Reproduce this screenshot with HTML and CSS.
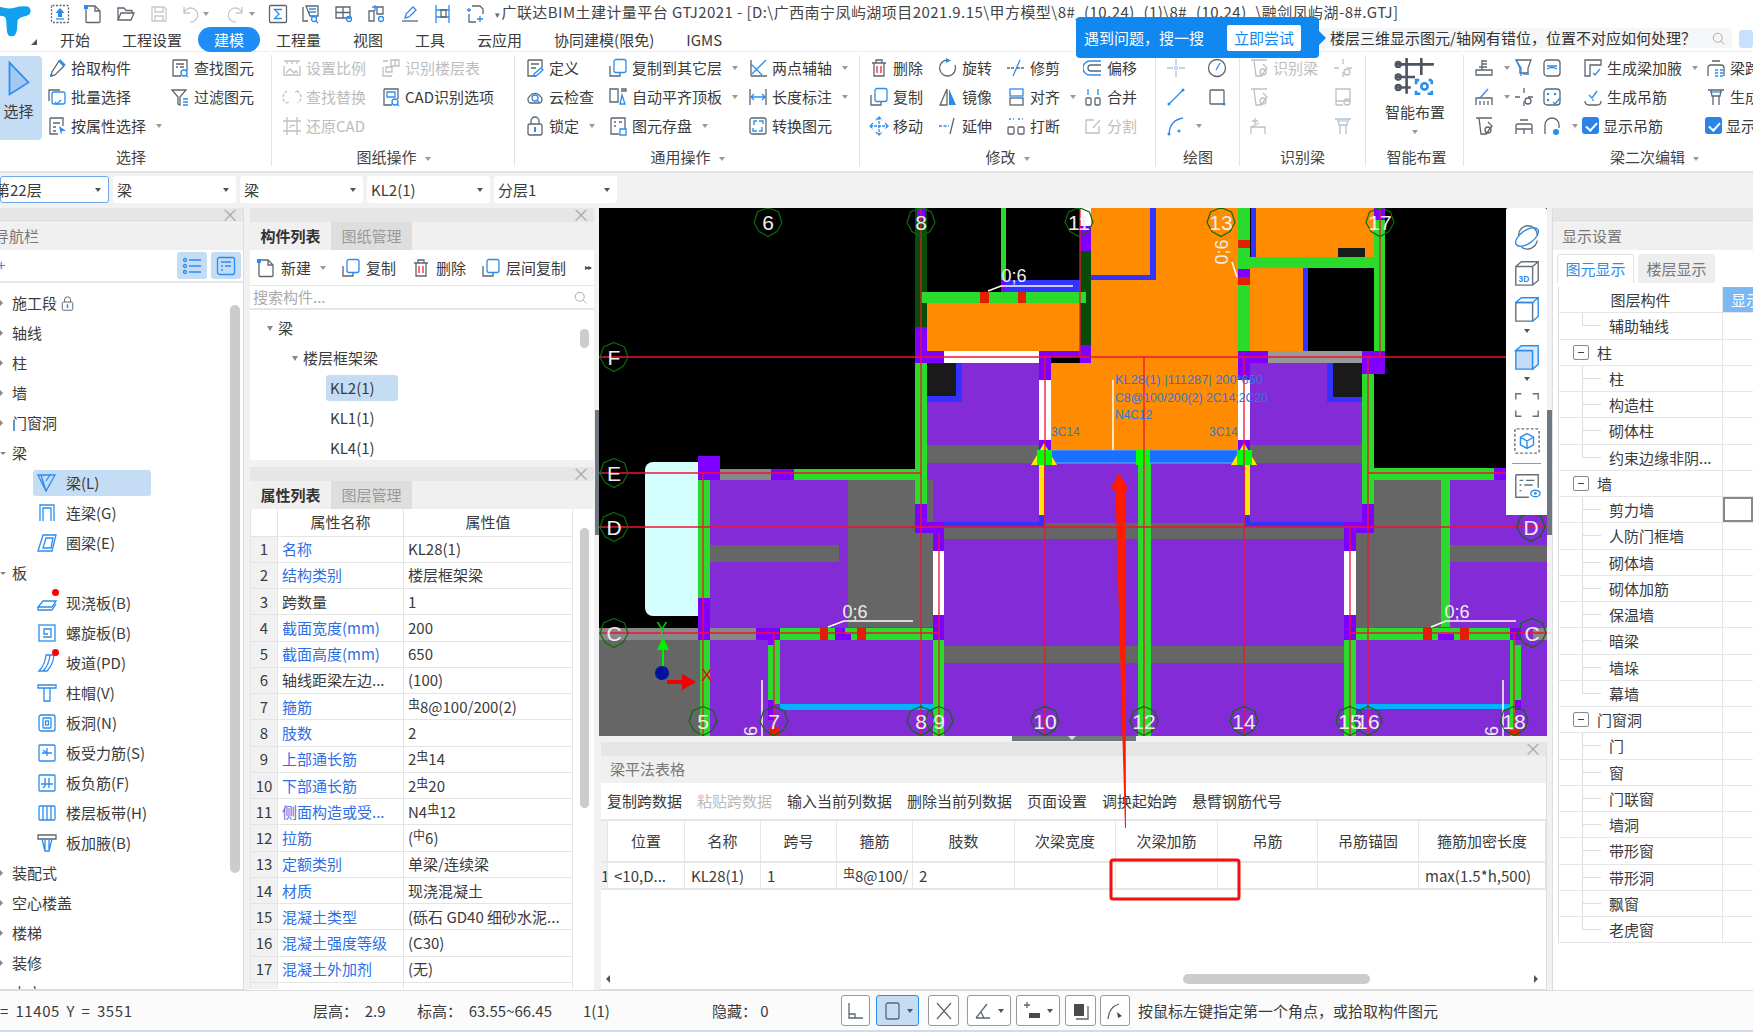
FILE: index.html
```html
<!DOCTYPE html>
<html lang="zh">
<head>
<meta charset="utf-8">
<title>广联达BIM土建计量平台 GTJ2021</title>
<link rel="stylesheet" href="styles.css">
</head>
<body>
<svg class="defs" width="0" height="0">
<defs>
<symbol id="up" viewBox="0 0 20 20"><rect x="1.5" y="1.5" width="17" height="17" rx="1" stroke-dasharray="2 1.5"/><path class="bf" d="M10 4l4.500 5H12v4H8V9H5.500z"/><path class="b" d="M6 15h8"/></symbol>
<symbol id="new" viewBox="0 0 20 20"><path d="M3 2h9l5 5v10.500q0 1-1 1H4q-1 0-1-1z"/><path d="M12 2v5h5"/><path class="bf" d="M1 1h4v4H1z"/></symbol>
<symbol id="open" viewBox="0 0 20 20"><path d="M2 16V4h6l2 2.500h6V9M2 16l3-7h13l-3 7z"/></symbol>
<symbol id="save" viewBox="0 0 20 20"><path d="M3 3h12l2 2v12H3zM6 3v5h8V3M6 17v-5h8v5"/></symbol>
<symbol id="undo" viewBox="0 0 20 20"><path d="M4 3v6h6M4 9a7 7 0 1 1 6 9"/></symbol>
<symbol id="redo" viewBox="0 0 20 20"><path d="M16 3v6h-6M16 9a7 7 0 1 0-6 9"/></symbol>
<symbol id="sig" viewBox="0 0 20 20"><rect x="1.500" y="1.500" width="17" height="17" rx="1"/><path class="b" d="M14 5.500H6.500L11 10l-4.500 4.500H14"/></symbol>
<symbol id="t1" viewBox="0 0 20 20"><path d="M2 3v14h5M5 2h12v10H9z"/><path class="b" d="M8 5h7M8 8h7"/><circle class="b" cx="13" cy="15" r="2.500"/><path class="b" d="M15 17l2 2"/></symbol>
<symbol id="t2" viewBox="0 0 20 20"><path d="M2 3h14v11H2zM9 3v11M2 8.500h14"/><circle class="b" cx="15" cy="15" r="2.500"/></symbol>
<symbol id="t3" viewBox="0 0 20 20"><path d="M2 7h5v10H2z"/><path d="M10 3h6v7h-6z"/><path class="b" d="M8 1v6M5 3h6"/><circle class="b" cx="14" cy="15" r="2.500"/></symbol>
<symbol id="t4" viewBox="0 0 20 20"><path d="M2 17h16"/><path class="b" d="M5 14l1-4 7-7 3 3-7 7z"/></symbol>
<symbol id="t5" viewBox="0 0 20 20"><path class="b" d="M3 1v18M16 1v18M3 6h13M3 13h13"/><path d="M8 6v7h5V6z"/></symbol>
<symbol id="t6" viewBox="0 0 20 20"><path d="M6 2h8l3 3v5M3 10v8h7"/><path class="b" d="M14 12v6M11 15h6M1 6h4M3 4v4"/></symbol>
<symbol id="pick" viewBox="0 0 20 20"><path d="M12 3l5 5-9 9-4 1 1-4z"/><path class="bf" d="M13 1l6 6-3 1-4-4zM3 16l3 2-3 1z"/></symbol>
<symbol id="batch" viewBox="0 0 20 20"><path d="M2 14V3h11"/><rect class="b" x="5" y="5" width="13" height="12" rx="2"/><path class="b" d="M8 15l2 2 4-4"/></symbol>
<symbol id="attr" viewBox="0 0 20 20"><path d="M3 2h13v8M3 2v16h8M6 7h7M6 11h3M6 15h3"/><path class="bf" d="M12 10l7 5h-4l-1 4z"/></symbol>
<symbol id="find" viewBox="0 0 20 20"><path d="M3 2h14v11M3 2v16h8M6 6h8M6 9h2M10 9h4"/><circle class="b" cx="14" cy="15" r="3"/><path class="b" d="M16 17l2 2"/></symbol>
<symbol id="filter" viewBox="0 0 20 20"><path d="M2 3h14l-6 7v8l-2-1v-7z"/><path class="b" d="M13 12h5M13 15h5M13 18h5"/></symbol>
<symbol id="scale" viewBox="0 0 20 20"><path d="M2 8v9h16V8M2 3h16M5 3v3M10 3v3M15 3v3M4 15l4-4 4 4 2-2 2 2"/></symbol>
<symbol id="floors" viewBox="0 0 20 20"><path d="M2 9v9h9M5 9h6v5H5zM10 2h8v6h-8zM14 2v6M2 3h5"/></symbol>
<symbol id="rep" viewBox="0 0 20 20"><path d="M5 4a7 7 0 0 0-1 12M15 4a7 7 0 0 1 1 12M4 16l3-1M16 4l-3 1" stroke-dasharray="3 1.500"/></symbol>
<symbol id="cad" viewBox="0 0 20 20"><path d="M3 2h14v10M3 2v16h8"/><path class="b" d="M6 5h8v5H6z"/><circle class="b" cx="14" cy="15" r="3"/><path class="b" d="M16 17l2 2"/></symbol>
<symbol id="rest" viewBox="0 0 20 20"><path d="M5 1v18M15 1v18M1 5h18M1 15h18M8 12a3 3 0 0 1 5-2"/></symbol>
<symbol id="def" viewBox="0 0 20 20"><path d="M3 2h14v8M3 2v16h8M6 6h8M6 10h5"/><path class="b" d="M9 16l7-6 2 2-7 6H9z"/></symbol>
<symbol id="cloud" viewBox="0 0 20 20"><path d="M5 16a4 4 0 0 1 0-7 6 6 0 0 1 10 0 4 4 0 0 1 0 7z"/><circle class="b" cx="10" cy="11" r="3"/><path class="b" d="M12 13l2 2"/></symbol>
<symbol id="lock" viewBox="0 0 20 20"><rect x="3" y="8" width="14" height="11" rx="2"/><path d="M6 8V5a4 4 0 0 1 8 0v3"/><path class="bf" d="M9 11h2v5H9z"/></symbol>
<symbol id="cp" viewBox="0 0 20 20"><path d="M2 8v10h10V15"/><rect class="b" x="6" y="1.500" width="12" height="13" rx="2"/></symbol>
<symbol id="align" viewBox="0 0 20 20"><path d="M2 2h8v13H2zM13 2h5v2h-5"/><path class="b" d="M14 8l-2 9h5z"/></symbol>
<symbol id="store" viewBox="0 0 20 20"><path d="M3 2h14v11M3 2v16h8M6 6h2M11 6h3M6 10h2"/><path class="b" d="M12 13h6v6h-6z"/></symbol>
<symbol id="two" viewBox="0 0 20 20"><path d="M3 18V2M3 18h16"/><path class="b" d="M4 16L18 2M3 6l11 11"/></symbol>
<symbol id="len" viewBox="0 0 20 20"><path d="M2 2v16M18 2v16"/><path class="b" d="M3 10h14M6 7l-3 3 3 3M14 7l3 3-3 3"/></symbol>
<symbol id="conv" viewBox="0 0 20 20"><rect x="2" y="2" width="16" height="16" rx="2"/><path class="b" d="M6 9V5h3M14 11v4h-3M11 5h4v3M9 15H5v-3"/></symbol>
<symbol id="del" viewBox="0 0 20 20"><path d="M3 5h14M7 5V2h6v3M5 5v13h10V5"/><path class="red" d="M8 8v7M12 8v7"/></symbol>
<symbol id="rot" viewBox="0 0 20 20"><path d="M10 2a8 8 0 1 0 7 5"/><path class="bf" d="M8 0l5 2.500L8 5z"/></symbol>
<symbol id="trim" viewBox="0 0 20 20"><path d="M1 10h7M11 10h8" stroke-dasharray="3 1"/><path class="b" d="M14 2L7 18"/></symbol>
<symbol id="offs" viewBox="0 0 20 20"><path class="b" d="M18 3H7a7 7 0 0 0 0 14h11"/><path d="M18 7H8a3 3 0 0 0 0 6h10"/></symbol>
<symbol id="mir" viewBox="0 0 20 20"><path d="M9 2L2 18h7z"/><path class="bf" d="M11 2l7 16h-7z"/></symbol>
<symbol id="ali" viewBox="0 0 20 20"><rect class="b" x="4" y="2" width="13" height="7"/><rect x="4" y="11" width="13" height="7"/></symbol>
<symbol id="mer" viewBox="0 0 20 20"><rect x="3" y="11" width="5" height="7" rx="1"/><rect x="12" y="11" width="5" height="7" rx="1"/><path class="b" d="M5 2v6M15 2v6"/></symbol>
<symbol id="mov" viewBox="0 0 20 20"><path class="b" d="M10 1v18M1 10h18M7 4l3-3 3 3M7 16l3 3 3-3M4 7l-3 3 3 3M16 7l3 3-3 3" stroke-dasharray="3 1"/></symbol>
<symbol id="ext" viewBox="0 0 20 20"><path class="b" d="M1 10h10" stroke-dasharray="3 1.500"/><path d="M16 2l-4 16"/></symbol>
<symbol id="brk" viewBox="0 0 20 20"><rect x="2" y="11" width="6" height="7" rx="1"/><rect x="12" y="11" width="6" height="7" rx="1"/><path class="b" d="M3 3h2M7 3h1M12 3h2M16 3h1" /></symbol>
<symbol id="spl" viewBox="0 0 20 20"><path d="M11 4H3v13h13v-7M10 12l7-8"/></symbol>
<symbol id="d1" viewBox="0 0 20 20"><path d="M1 10h6M13 10h6M10 1v6M10 13v6"/><circle class="b" cx="10" cy="10" r="1.500"/></symbol>
<symbol id="d2" viewBox="0 0 20 20"><circle cx="10" cy="10" r="8.500"/><path class="b" d="M9 12l4-7"/></symbol>
<symbol id="d3" viewBox="0 0 20 20"><path class="b" d="M3 17L17 3"/><circle class="bf" cx="3" cy="17" r="1.500"/><circle class="bf" cx="17" cy="3" r="1.500"/></symbol>
<symbol id="d4" viewBox="0 0 20 20"><rect x="3" y="3" width="14" height="14" rx="1"/><circle class="bf" cx="17" cy="17" r="1.500"/></symbol>
<symbol id="d5" viewBox="0 0 20 20"><path class="b" d="M3 18Q4 4 17 2"/><circle class="bf" cx="3" cy="18" r="1.500"/><circle class="bf" cx="13" cy="15" r="1.500"/></symbol>
<symbol id="sb1" viewBox="0 0 20 20"><path d="M2 2h16M5 2l2 16h6M14 6l4 4-6 8"/><circle cx="14" cy="14" r="3"/></symbol>
<symbol id="sb2" viewBox="0 0 20 20"><path d="M10 1v5M10 14v5M1 10h5M14 10h5"/><circle cx="14" cy="14" r="3"/></symbol>
<symbol id="sb3" viewBox="0 0 20 20"><path d="M3 2h14v12H3zM3 18h7M3 14v4"/><circle cx="14" cy="15" r="3"/></symbol>
<symbol id="sb4" viewBox="0 0 20 20"><path d="M6 2v6M3 5h6M2 18v-7h14v7M2 11l8-4"/></symbol>
<symbol id="smart" viewBox="0 0 40 40"><path d="M2 8h36M2 20h18M2 30h14M12 2v34M26 2v16" stroke-width="2.500"/><circle cx="4" cy="8" r="2.500"/><circle cx="4" cy="20" r="2.500"/><circle cx="4" cy="30" r="2.500"/><path class="b" stroke-width="2.500" d="M24 23h-3v4M36 23h-3M36 23v4M21 33v3h4M36 33v3h-4"/><circle class="b" stroke-width="2.500" cx="29" cy="29" r="3"/></symbol>
<symbol id="e1" viewBox="0 0 20 20"><path d="M2 12h16v5H2zM8 2v10M8 3h5M8 6h5M5 9h8"/></symbol>
<symbol id="e2" viewBox="0 0 20 20"><path d="M2 2h15l-3 8v5H6v-5z"/><path class="b" d="M2 2l5 8v8M9 16h6"/></symbol>
<symbol id="e3" viewBox="0 0 20 20"><rect x="2" y="2" width="16" height="16" rx="3"/><path class="b" d="M5 8h10M5 11q5-3 10 0"/></symbol>
<symbol id="e4" viewBox="0 0 20 20"><path d="M2 18V2h16v5H7v11z"/><path class="b" d="M10 15l2 2 5-6"/></symbol>
<symbol id="e5" viewBox="0 0 20 20"><path d="M2 18v-8q0-3 3-3h10q3 0 3 3v8M6 3h8"/><path class="b" d="M9 12h3M14 12h3M9 15h3M14 15h3M9 18h3M14 18h3"/></symbol>
<symbol id="e6" viewBox="0 0 20 20"><path d="M2 18v-7h16v7M6 18v-4M10 18v-4M14 18v-4"/><path class="b" d="M14 2L6 11"/></symbol>
<symbol id="e7" viewBox="0 0 20 20"><rect x="2" y="2" width="16" height="16" rx="3"/><circle class="bf" cx="6" cy="7" r="1.200"/><circle class="bf" cx="13" cy="7" r="1.200"/><circle class="bf" cx="6" cy="13" r="1.200"/><path class="b" d="M11 15l2 2 5-6"/></symbol>
<symbol id="e8" viewBox="0 0 20 20"><path d="M2 14q0 4 4 4h8q4 0 4-4"/><path class="b" d="M6 8l3 3 5-7M10 14v-2"/></symbol>
<symbol id="e9" viewBox="0 0 20 20"><path d="M2 3h16M5 3l1 6h8l1-6M7 9v9M13 9v9"/><path class="b" d="M4 5h12"/></symbol>
<symbol id="e10" viewBox="0 0 20 20"><path d="M2 18v-8q0-2 2-2h12q2 0 2 2v8M2 13h16M6 4h8M10 13v5"/></symbol>
<symbol id="e11" viewBox="0 0 20 20"><path d="M3 18V9a7 7 0 0 1 14 0v3"/><circle class="bf" cx="14" cy="16" r="3"/></symbol>
<symbol id="tree1" viewBox="0 0 20 20"><path class="b" d="M1 2h17L9 18zM4 2l5 16M13 2L9 8"/></symbol>
<symbol id="tree2" viewBox="0 0 20 20"><path class="b" d="M3 18V2h14v16M6 18V5h8v13"/></symbol>
<symbol id="tree3" viewBox="0 0 20 20"><path class="b" d="M6 2h13l-4 16H1zM9 5h7l-2 10H6z"/></symbol>
<symbol id="tree4" viewBox="0 0 20 20"><path class="b" d="M1 14h14l4-6H6zM1 14v3h14l4-6"/></symbol>
<symbol id="tree5" viewBox="0 0 20 20"><rect class="b" x="2" y="2" width="16" height="16"/><path class="b" d="M6 14h8V6H7v5h4"/></symbol>
<symbol id="tree6" viewBox="0 0 20 20"><path class="b" d="M2 18Q8 12 9 2h8q-1 10-7 16zM6 18q6-6 7-16"/></symbol>
<symbol id="tree7" viewBox="0 0 20 20"><path class="b" d="M1 2h18v3H1zM7 5v13h6V5"/></symbol>
<symbol id="tree8" viewBox="0 0 20 20"><rect class="b" x="2" y="2" width="16" height="16" rx="2"/><rect class="b" x="6" y="5" width="8" height="10" rx="1"/><rect class="b" x="8.500" y="8" width="3" height="4"/></symbol>
<symbol id="tree9" viewBox="0 0 20 20"><rect class="b" x="2" y="2" width="16" height="16" rx="1"/><path class="b" d="M5 10h10M10 5v8M6 7l4 3"/></symbol>
<symbol id="tree10" viewBox="0 0 20 20"><rect class="b" x="2" y="2" width="16" height="16" rx="1"/><path class="b" d="M4 11h12M8 5v8l-2 2M12 5v10"/></symbol>
<symbol id="tree11" viewBox="0 0 20 20"><rect class="b" x="2" y="3" width="16" height="14" rx="1"/><path class="b" d="M6 3v14M10 3v14M14 3v14"/></symbol>
<symbol id="tree12" viewBox="0 0 20 20"><path d="M1 2h18v4H1z"/><path class="b" d="M5 6l3 12h4l3-12M8 6v12M12 6v12"/></symbol>
<symbol id="list" viewBox="0 0 20 20"><circle class="b" cx="3" cy="4" r="1.500"/><circle class="b" cx="3" cy="10" r="1.500"/><circle class="b" cx="3" cy="16" r="1.500"/><path class="b" d="M7 4h12M7 10h12M7 16h12"/></symbol>
<symbol id="form" viewBox="0 0 20 20"><rect class="b" x="1.500" y="1.500" width="17" height="17" rx="2"/><path class="b" d="M5 6h10M5 10h2M9 10h6M5 14h2"/></symbol>
<symbol id="mag" viewBox="0 0 20 20"><circle cx="9" cy="9" r="6"/><path d="M13.500 13.500L18 18"/></symbol>
<symbol id="f1" viewBox="0 0 30 30"><path d="M6 13a10 10 0 0 1 20 0M9 26a11 11 0 0 0 17-7"/><ellipse class="b" cx="15" cy="15" rx="14" ry="7" transform="rotate(-35 15 15)"/></symbol>
<symbol id="f2" viewBox="0 0 30 30"><path d="M3 8l6-5h18v20l-6 5H3zM3 8h18v20M21 8l6-5"/><text class="f3d" x="6" y="25">3D</text></symbol>
<symbol id="f3" viewBox="0 0 30 30"><path d="M3 8v20h18V8z"/><path class="b" d="M3 8l6-5h18v20l-6 5M21 8l6-5M3 8h18"/></symbol>
<symbol id="f4" viewBox="0 0 30 30"><path class="lf" d="M3 8h18v20H3z"/><path class="lf2" d="M3 8l6-5h18v20l-6 5V8z"/></symbol>
<symbol id="f5" viewBox="0 0 30 30"><path d="M3 9V3h6M21 3h6v6M27 21v6h-6M9 27H3v-6"/></symbol>
<symbol id="f6" viewBox="0 0 30 30"><rect x="2" y="2" width="26" height="26" rx="2" stroke-dasharray="3 2"/><path class="b" d="M15 7l7 4v8l-7 4-7-4v-8zM8 11l7 4 7-4M15 15v8"/></symbol>
<symbol id="f7" viewBox="0 0 30 30"><path d="M3 3h24v14M3 3v24h14M7 9h4M14 9h9M7 14h2M12 14h9M7 20h2"/><ellipse class="b" cx="24" cy="23" rx="5" ry="3.500"/><circle class="bf" cx="24" cy="23" r="1.500"/></symbol>
<symbol id="s1" viewBox="0 0 20 20"><path d="M3 2v15h14M3 13h6v4"/></symbol>
<symbol id="s2" viewBox="0 0 20 20"><rect x="3" y="2" width="13" height="16" rx="2"/></symbol>
<symbol id="s3" viewBox="0 0 20 20"><path d="M3 2l14 16M17 2L3 18"/></symbol>
<symbol id="s4" viewBox="0 0 20 20"><path d="M2 17h14M2 17L13 3M7 11l3 6"/></symbol>
<symbol id="s5" viewBox="0 0 20 20"><path d="M1 4h6M4 1v6"/><path class="fillk" d="M6 12h11v5H6z"/></symbol>
<symbol id="s6" viewBox="0 0 20 20"><path class="fillk" d="M3 3h10v12H3z"/><path d="M5 18h12V5"/></symbol>
<symbol id="s7" viewBox="0 0 20 20"><path d="M3 18Q4 6 14 3"/><path class="fillk" d="M12 11l5 4-4 2z"/></symbol>
<polygon id="oct" points="14,0 24.500,4.500 28,15 23,24 14,29 5,24 0,15 3.500,4.500" transform="translate(-14,-14.500)"/>
</defs>
</svg>

<div class="app">
  <header class="top">
    <div class="logo">
      <svg class="logo-t" viewBox="0 0 50 50"><path d="M-6 4q6-2 12 0 8 2 15 0 6-2 16-2 8 0 8 7 0 7-10 8-6 1-9 5l-1 14q-1 10-8 10-7 0-7-10l-1-14q-1-6-6-6-6 0-9-2z"/></svg>
      <i class="logo-mark"></i>
    </div>
    <div class="top-right">
      <div class="qat">
        <svg class="ic qa"><use href="#up"/></svg>
        <svg class="ic qa"><use href="#new"/></svg>
        <svg class="ic qa"><use href="#open"/></svg>
        <svg class="ic qa off tight"><use href="#save"/></svg>
        <svg class="ic qa off"><use href="#undo"/></svg><i class="caret q-caret"></i>
        <svg class="ic qa off"><use href="#redo"/></svg><i class="caret q-caret short"></i>
        <svg class="ic qa"><use href="#sig"/></svg>
        <svg class="ic qa"><use href="#t1"/></svg>
        <svg class="ic qa"><use href="#t2"/></svg>
        <svg class="ic qa"><use href="#t3"/></svg>
        <svg class="ic qa"><use href="#t4"/></svg>
        <svg class="ic qa"><use href="#t5"/></svg>
        <svg class="ic qa"><use href="#t6"/></svg>
        <span class="win-title"><small>▾</small>广联达BIM土建计量平台 GTJ2021 - [D:\广西南宁凤屿湖项目2021.9.15\甲方模型\8#_(10.24)_(1)\8#_(10.24)_\融剑凤屿湖-8#.GTJ]</span>
      </div>
      <nav class="tabs">
        <span class="tab">开始</span><span class="tab">工程设置</span><span class="tab active">建模</span><span class="tab">工程量</span><span class="tab">视图</span><span class="tab">工具</span><span class="tab">云应用</span><span class="tab">协同建模(限免)</span><span class="tab">IGMS</span>
        <div class="search"><span class="search-text">楼层三维显示图元/轴网有错位，位置不对应如何处理？</span><svg class="ic sm"><use href="#mag"/></svg></div>
        <i class="assist"></i>
      </nav>
    </div>
    <div class="popup"><span>遇到问题，搜一搜</span><b class="popup-btn">立即尝试</b></div>
  </header>

  <section class="ribbon">
    <div class="group g1">
      <div class="rows">
        <div class="bigsel"><svg viewBox="0 0 30 44" class="bigarrow"><path d="M4 3l22 23-22 14z"/></svg><span>选择</span></div>
        <span class="it"><svg class="ic"><use href="#pick"/></svg>拾取构件</span>
        <span class="it"><svg class="ic"><use href="#find"/></svg>查找图元</span>
        <span class="it"><svg class="ic"><use href="#batch"/></svg>批量选择</span>
        <span class="it"><svg class="ic"><use href="#filter"/></svg>过滤图元</span>
        <span class="it"><svg class="ic"><use href="#attr"/></svg>按属性选择<i class="caret"></i></span>
      </div>
      <div class="glabel">选择</div>
    </div>
    <div class="group g2">
      <div class="rows">
        <span class="it off"><svg class="ic"><use href="#scale"/></svg>设置比例</span>
        <span class="it off"><svg class="ic"><use href="#floors"/></svg>识别楼层表</span>
        <span class="it off"><svg class="ic"><use href="#rep"/></svg>查找替换</span>
        <span class="it"><svg class="ic"><use href="#cad"/></svg>CAD识别选项</span>
        <span class="it off"><svg class="ic"><use href="#rest"/></svg>还原CAD</span>
      </div>
      <div class="glabel">图纸操作<i class="caret"></i></div>
    </div>
    <div class="group g3">
      <div class="rows">
        <span class="it"><svg class="ic"><use href="#def"/></svg>定义</span>
        <span class="it"><svg class="ic"><use href="#cp"/></svg>复制到其它层<i class="caret"></i></span>
        <span class="it"><svg class="ic"><use href="#two"/></svg>两点辅轴<i class="caret"></i></span>
        <span class="it"><svg class="ic"><use href="#cloud"/></svg>云检查</span>
        <span class="it"><svg class="ic"><use href="#align"/></svg>自动平齐顶板<i class="caret"></i></span>
        <span class="it"><svg class="ic"><use href="#len"/></svg>长度标注<i class="caret"></i></span>
        <span class="it"><svg class="ic"><use href="#lock"/></svg>锁定<i class="caret"></i></span>
        <span class="it"><svg class="ic"><use href="#store"/></svg>图元存盘<i class="caret"></i></span>
        <span class="it"><svg class="ic"><use href="#conv"/></svg>转换图元</span>
      </div>
      <div class="glabel">通用操作<i class="caret"></i></div>
    </div>
    <div class="group g4">
      <div class="rows">
        <span class="it"><svg class="ic"><use href="#del"/></svg>删除</span>
        <span class="it"><svg class="ic"><use href="#rot"/></svg>旋转</span>
        <span class="it"><svg class="ic"><use href="#trim"/></svg>修剪</span>
        <span class="it"><svg class="ic"><use href="#offs"/></svg>偏移</span>
        <span class="it"><svg class="ic"><use href="#cp"/></svg>复制</span>
        <span class="it"><svg class="ic"><use href="#mir"/></svg>镜像</span>
        <span class="it"><svg class="ic"><use href="#ali"/></svg>对齐<i class="caret"></i></span>
        <span class="it"><svg class="ic"><use href="#mer"/></svg>合并</span>
        <span class="it"><svg class="ic"><use href="#mov"/></svg>移动</span>
        <span class="it"><svg class="ic"><use href="#ext"/></svg>延伸</span>
        <span class="it"><svg class="ic"><use href="#brk"/></svg>打断</span>
        <span class="it off"><svg class="ic"><use href="#spl"/></svg>分割</span>
      </div>
      <div class="glabel">修改<i class="caret"></i></div>
    </div>
    <div class="group g5">
      <div class="rows">
        <span class="it off"><svg class="ic"><use href="#d1"/></svg></span>
        <span class="it"><svg class="ic"><use href="#d2"/></svg></span>
        <span class="it"><svg class="ic"><use href="#d3"/></svg></span>
        <span class="it"><svg class="ic"><use href="#d4"/></svg></span>
        <span class="it"><svg class="ic"><use href="#d5"/></svg><i class="caret"></i></span>
      </div>
      <div class="glabel">绘图</div>
    </div>
    <div class="group g6">
      <div class="rows">
        <span class="it off"><svg class="ic"><use href="#sb1"/></svg>识别梁</span>
        <span class="it off"><svg class="ic"><use href="#sb2"/></svg></span>
        <span class="it off"><svg class="ic"><use href="#sb1"/></svg></span>
        <span class="it off"><svg class="ic"><use href="#sb3"/></svg></span>
        <span class="it off"><svg class="ic"><use href="#sb4"/></svg></span>
        <span class="it off"><svg class="ic"><use href="#e9"/></svg></span>
      </div>
      <div class="glabel">识别梁</div>
    </div>
    <div class="group g7">
      <div class="smart">
        <svg class="ic-big"><use href="#smart"/></svg>
        <span>智能布置</span>
        <i class="caret"></i>
      </div>
      <div class="glabel">智能布置</div>
    </div>
    <div class="group g8">
      <div class="rows">
        <span class="it"><svg class="ic"><use href="#e1"/></svg><i class="caret"></i></span>
        <span class="it"><svg class="ic"><use href="#e2"/></svg></span>
        <span class="it"><svg class="ic"><use href="#e3"/></svg></span>
        <span class="it"><svg class="ic"><use href="#e4"/></svg>生成梁加腋<i class="caret"></i></span>
        <span class="it"><svg class="ic"><use href="#e5"/></svg>梁跨分类</span>
        <span class="it"><svg class="ic"><use href="#e6"/></svg><i class="caret"></i></span>
        <span class="it"><svg class="ic"><use href="#sb2"/></svg></span>
        <span class="it"><svg class="ic"><use href="#e7"/></svg></span>
        <span class="it"><svg class="ic"><use href="#e8"/></svg>生成吊筋</span>
        <span class="it"><svg class="ic"><use href="#e9"/></svg>生成加腋</span>
        <span class="it"><svg class="ic"><use href="#sb1"/></svg></span>
        <span class="it"><svg class="ic"><use href="#e10"/></svg></span>
        <span class="it"><svg class="ic"><use href="#e11"/></svg><i class="caret"></i></span>
        <span class="it chk-it"><i class="chk"></i>显示吊筋</span>
        <span class="it chk-it"><i class="chk"></i>显示加腋</span>
      </div>
      <div class="glabel">梁二次编辑<i class="caret"></i></div>
    </div>
  </section>

  <section class="combos">
    <div class="combo first"><span class="clipl">第22层</span><i class="caret dark"></i></div>
    <div class="combo"><span>梁</span><i class="caret dark"></i></div>
    <div class="combo"><span>梁</span><i class="caret dark"></i></div>
    <div class="combo"><span>KL2(1)</span><i class="caret dark"></i></div>
    <div class="combo"><span>分层1</span><i class="caret dark"></i></div>
  </section>

  <main class="main">
    <aside class="panel nav">
      <div class="phead"><span class="x">×</span></div>
      <div class="ptitle clipl">导航栏</div>
      <div class="navtools"><span class="plus">+</span><span class="navbtn"><svg class="ic"><use href="#list"/></svg></span><span class="navbtn"><svg class="ic"><use href="#form"/></svg></span></div>
      <div class="navtree">
        <div class="sb nav-sb"></div>
        <div class="n0 cr">施工段 <svg class="ic lk"><use href="#lock"/></svg></div>
        <div class="n0 cr">轴线</div>
        <div class="n0 cr">柱</div>
        <div class="n0 cr">墙</div>
        <div class="n0 cr">门窗洞</div>
        <div class="n0 cd">梁</div>
        <div class="n1 sel"><svg class="ic"><use href="#tree1"/></svg>梁(L)</div>
        <div class="n1"><svg class="ic"><use href="#tree2"/></svg>连梁(G)</div>
        <div class="n1"><svg class="ic"><use href="#tree3"/></svg>圈梁(E)</div>
        <div class="n0 cd">板</div>
        <div class="n1 dot"><svg class="ic"><use href="#tree4"/></svg>现浇板(B)</div>
        <div class="n1"><svg class="ic"><use href="#tree5"/></svg>螺旋板(B)</div>
        <div class="n1 dot"><svg class="ic"><use href="#tree6"/></svg>坡道(PD)</div>
        <div class="n1"><svg class="ic"><use href="#tree7"/></svg>柱帽(V)</div>
        <div class="n1"><svg class="ic"><use href="#tree8"/></svg>板洞(N)</div>
        <div class="n1"><svg class="ic"><use href="#tree9"/></svg>板受力筋(S)</div>
        <div class="n1"><svg class="ic"><use href="#tree10"/></svg>板负筋(F)</div>
        <div class="n1"><svg class="ic"><use href="#tree11"/></svg>楼层板带(H)</div>
        <div class="n1"><svg class="ic"><use href="#tree12"/></svg>板加腋(B)</div>
        <div class="n0 cr">装配式</div>
        <div class="n0 cr">空心楼盖</div>
        <div class="n0 cr">楼梯</div>
        <div class="n0 cr">装修</div>
        <div class="n0 cr">土方</div>
      </div>
    </aside>

    <div class="midcol">
      <section class="panel comp">
        <div class="phead"><span class="x">×</span></div>
        <div class="ptabs"><span class="ptab on">构件列表</span><span class="ptab">图纸管理</span></div>
        <div class="comp-tools">
          <span class="ct"><svg class="ic"><use href="#new"/></svg>新建<i class="caret"></i></span>
          <span class="ct"><svg class="ic"><use href="#cp"/></svg>复制</span>
          <span class="ct"><svg class="ic"><use href="#del"/></svg>删除</span>
          <span class="ct"><svg class="ic"><use href="#cp"/></svg>层间复制</span>
          <span class="more">▸▸</span>
        </div>
        <div class="comp-search"><span>搜索构件...</span><svg class="ic sm"><use href="#mag"/></svg></div>
        <div class="comp-tree">
          <div class="sb comp-sb"></div>
          <div class="c0"><i class="tri"></i>梁</div>
          <div class="c1"><i class="tri"></i>楼层框架梁</div>
          <div class="c2"><span class="c2sel">KL2(1)</span></div>
          <div class="c2"><span>KL1(1)</span></div>
          <div class="c2"><span>KL4(1)</span></div>
        </div>
      </section>
      <section class="panel props">
        <div class="phead"><span class="x">×</span></div>
        <div class="ptabs"><span class="ptab on">属性列表</span><span class="ptab">图层管理</span></div>
        <div class="prop-wrap">
          <div class="sb prop-sb"></div>
          <table class="ptable">
            <thead><tr><th class="pn"></th><th class="pk">属性名称</th><th class="pv">属性值</th></tr></thead>
            <tbody>
              <tr><td class="pn">1</td><td class="pk l">名称</td><td class="pv">KL28(1)</td></tr>
              <tr><td class="pn">2</td><td class="pk l">结构类别</td><td class="pv">楼层框架梁</td></tr>
              <tr><td class="pn">3</td><td class="pk">跨数量</td><td class="pv">1</td></tr>
              <tr><td class="pn">4</td><td class="pk l">截面宽度(mm)</td><td class="pv">200</td></tr>
              <tr><td class="pn">5</td><td class="pk l">截面高度(mm)</td><td class="pv">650</td></tr>
              <tr><td class="pn">6</td><td class="pk">轴线距梁左边...</td><td class="pv">(100)</td></tr>
              <tr><td class="pn">7</td><td class="pk l">箍筋</td><td class="pv"><sup>虫</sup>8@100/200(2)</td></tr>
              <tr><td class="pn">8</td><td class="pk l">肢数</td><td class="pv">2</td></tr>
              <tr><td class="pn">9</td><td class="pk l">上部通长筋</td><td class="pv">2<sup>虫</sup>14</td></tr>
              <tr><td class="pn">10</td><td class="pk l">下部通长筋</td><td class="pv">2<sup>虫</sup>20</td></tr>
              <tr><td class="pn">11</td><td class="pk l">侧面构造或受...</td><td class="pv">N4<sup>虫</sup>12</td></tr>
              <tr><td class="pn">12</td><td class="pk l">拉筋</td><td class="pv">(<sup>中</sup>6)</td></tr>
              <tr><td class="pn">13</td><td class="pk l">定额类别</td><td class="pv">单梁/连续梁</td></tr>
              <tr><td class="pn">14</td><td class="pk l">材质</td><td class="pv">现浇混凝土</td></tr>
              <tr><td class="pn">15</td><td class="pk l">混凝土类型</td><td class="pv">(砾石 GD40 细砂水泥...</td></tr>
              <tr><td class="pn">16</td><td class="pk l">混凝土强度等级</td><td class="pv">(C30)</td></tr>
              <tr><td class="pn">17</td><td class="pk l">混凝土外加剂</td><td class="pv">(无)</td></tr>
              <tr><td class="pn">18</td><td class="pk l">泵送类型</td><td class="pv">(混凝土泵)</td></tr>
            </tbody>
          </table>
        </div>
      </section>
    </div>

    <div class="centercol">
      <i class="sash sash-l"></i>
      <i class="sash sash-r"></i>
      <i class="sash-b"></i>
      <div class="canvas">
        <svg class="cad" viewBox="599 208 948 528" width="948" height="528">
          <rect x="599" y="208" width="948" height="528" fill="#000"/>
          <g class="o">
            <rect x="1051" y="363" width="187" height="87"/><rect x="1091" y="208" width="147" height="155"/><rect x="927" y="303" width="153" height="48"/><rect x="1256" y="208" width="118" height="50"/><rect x="1250" y="268" width="53" height="83"/>
          </g>
          <rect x="1338" y="248" width="27" height="9" fill="#1a1a1a"/>
          <g class="p">
            <rect x="700" y="480" width="847" height="256"/><rect x="927" y="463" width="435" height="20"/><rect x="927" y="363" width="112" height="82"/><rect x="1250" y="363" width="112" height="82"/>
          </g>
          <g class="k">
            <rect x="927" y="445" width="112" height="18"/><rect x="1250" y="445" width="112" height="18"/><rect x="848" y="480" width="85" height="147"/><rect x="1374" y="480" width="67" height="147"/><rect x="1356" y="533" width="18" height="95"/><rect x="710" y="545" width="129" height="17"/><rect x="944" y="523" width="400" height="16"/><rect x="944" y="646" width="400" height="17"/><rect x="1450" y="545" width="97" height="17"/><rect x="599" y="628" width="101" height="108"/>
          </g>
          <rect x="645" y="462" width="60" height="154" rx="8" fill="#d4ffff"/>
          <rect x="698" y="480" width="12" height="118" class="g"/><rect x="698" y="598" width="12" height="42" class="v"/><rect x="700" y="640" width="10" height="96" class="g"/><rect x="698" y="456" width="22" height="24" class="v"/><rect x="720" y="469" width="51" height="11" class="a"/><rect x="771" y="469" width="23" height="11" class="v"/><rect x="794" y="469" width="133" height="11" class="g"/>
          <rect x="915" y="220" width="12" height="107" class="d"/><rect x="915" y="208" width="12" height="12" class="d"/><rect x="917" y="208" width="8" height="12" class="v"/><rect x="915" y="327" width="12" height="36" class="v"/><rect x="915" y="351" width="29" height="12" class="v"/><rect x="944" y="351" width="95" height="12" fill="#fff"/><rect x="915" y="363" width="12" height="141" class="g"/><rect x="915" y="504" width="12" height="29" class="v"/><rect x="915" y="522" width="29" height="11" class="v"/>
          <rect x="933" y="533" width="11" height="18" class="v"/><rect x="933" y="551" width="11" height="64" fill="#fff"/><rect x="933" y="615" width="11" height="25" class="v"/><rect x="933" y="640" width="11" height="96" class="g"/>
          <rect x="599" y="628" width="157" height="12" class="a"/><rect x="698" y="628" width="12" height="12" class="v"/><rect x="756" y="628" width="24" height="12" class="v"/><rect x="768" y="640" width="6" height="10" class="v"/><rect x="780" y="628" width="153" height="12" class="g"/><rect x="820" y="628" width="8" height="12" class="r"/><rect x="857" y="628" width="9" height="12" class="r"/><rect x="835" y="628" width="10" height="6" class="v"/><rect x="835" y="634" width="16" height="6" class="v"/>
          <rect x="768" y="645" width="6" height="55" class="g"/><rect x="768" y="700" width="6" height="20" class="v"/><rect x="774" y="640" width="6" height="64" class="g"/><rect x="770" y="728" width="10" height="7" class="r"/><rect x="780" y="704" width="153" height="6" class="c"/>
          <rect x="1138" y="450" width="13" height="286" class="g"/>
          <rect x="1051" y="450" width="187" height="13" fill="#1a6fff" stroke="#6aa9ff"/>
          <rect x="1039" y="440" width="12" height="10" class="v"/><rect x="1238" y="440" width="12" height="10" class="v"/>
          <polygon points="1044,443 1031,465 1057,465" class="y"/><polygon points="1244,443 1231,465 1257,465" class="y"/>
          <rect x="1037" y="450" width="15" height="15" class="n"/><rect x="1136" y="450" width="14" height="15" class="n"/><rect x="1237" y="450" width="15" height="15" class="n"/>
          <rect x="1039" y="465" width="5" height="50" class="y"/><rect x="1245" y="465" width="5" height="50" class="y"/>
          <rect x="1039" y="351" width="52" height="6" class="v"/><rect x="1039" y="351" width="12" height="29" class="v"/><rect x="1039" y="380" width="12" height="60" fill="#fff"/>
          <rect x="1080" y="208" width="11" height="18" fill="#fff"/><rect x="1080" y="226" width="11" height="25" class="v"/><rect x="1080" y="251" width="11" height="94" class="d"/><rect x="1080" y="345" width="11" height="18" class="v"/>
          <rect x="1001" y="280" width="79" height="12" class="b"/><rect x="1001" y="280" width="5" height="12" class="v"/><rect x="1001" y="208" width="5" height="72" class="g"/><rect x="921.500" y="292" width="164.500" height="11" class="g"/><rect x="980" y="292" width="9" height="11" class="r"/><rect x="1018" y="292" width="8" height="11" class="r"/>
          <rect x="1150" y="208" width="6" height="72" class="b"/><rect x="1091" y="275" width="65" height="5" class="b"/>
          <rect x="1238" y="208" width="12" height="143" class="g"/><rect x="1251" y="208" width="5" height="60" class="b"/><rect x="1245" y="257" width="129" height="11" class="g"/><rect x="1238" y="240" width="12" height="8" class="r"/><rect x="1238" y="269" width="12" height="8" class="v"/><rect x="1238" y="277" width="12" height="8" class="r"/><rect x="1303" y="268" width="5" height="83" class="b"/><rect x="1374" y="208" width="11" height="143" class="g"/><rect x="1374" y="208" width="11" height="12" class="v"/>
          <rect x="1238" y="351" width="30" height="12" class="v"/><rect x="1268" y="351" width="94" height="12" fill="#999"/><rect x="1362" y="351" width="23" height="23" class="v"/><rect x="1238" y="363" width="12" height="17" class="v"/><rect x="1238" y="380" width="12" height="60" fill="#fff"/>
          <g fill="#1a1a1a"><rect x="927" y="363" width="29" height="33"/><rect x="1333" y="363" width="29" height="34"/></g>
          <rect x="956" y="363" width="6" height="39" class="b"/><rect x="927" y="396" width="35" height="6" class="b"/><rect x="1327" y="363" width="6" height="39" class="b"/><rect x="1327" y="397" width="35" height="5" class="b"/>
          <rect x="1362" y="374" width="12" height="130" class="g"/><rect x="1362" y="504" width="12" height="29" class="v"/><rect x="1344" y="522" width="30" height="11" class="v"/><rect x="1344" y="533" width="12" height="18" class="v"/><rect x="1344" y="551" width="12" height="64" fill="#fff"/><rect x="1344" y="615" width="12" height="25" class="v"/><rect x="1344" y="640" width="12" height="96" class="g"/>
          <rect x="1368" y="468" width="126" height="12" class="g"/><rect x="1494" y="468" width="12" height="12" class="v"/><rect x="1441" y="480" width="9" height="147" class="g"/>
          <rect x="1356" y="628" width="154" height="12" class="g"/><rect x="1423" y="628" width="9" height="12" class="r"/><rect x="1460" y="628" width="9" height="12" class="r"/><rect x="1438" y="634" width="16" height="6" class="v"/><rect x="1510" y="628" width="11" height="12" class="v"/><rect x="1510" y="640" width="5" height="96" class="g"/><rect x="1515" y="645" width="6" height="55" class="g"/><rect x="1515" y="700" width="6" height="10" class="v"/><rect x="1510" y="730" width="10" height="5" class="r"/><rect x="1356" y="704" width="154" height="5" class="c"/><rect x="1533" y="628" width="14" height="12" class="a"/>
          <rect x="944" y="522" width="95" height="5" class="b"/><rect x="1039" y="515" width="5" height="12" class="b"/><rect x="1245" y="515" width="5" height="12" class="b"/><rect x="1245" y="522" width="99" height="5" class="b"/>
          <g class="rl">
            <path d="M599 357H1506M599 473H921M1368 473H1506M599 527H1547M599 633H939M1350 633H1547"/>
            <path d="M921 208V736M1080 208V357M1244 357V736M1380 208V357M703 473V736M774 633V736M939 533V736M1045 357V736M1144 357V736M1350 527V736M1368 357V736M1514 633V736"/>
          </g>
          <g class="wl">
            <path d="M988 291L1001 286H1073M828 627L844 621H913M1431 627L1446 621H1516M1113 380V450M762 680V736M1503 680V736M1232 262L1237 277"/>
          </g>
          <g class="note">
            <text x="1115" y="384" textLength="148" lengthAdjust="spacingAndGlyphs">KL28(1) |111287| 200*650</text>
            <text x="1115" y="402" textLength="153" lengthAdjust="spacingAndGlyphs">C8@100/200(2) 2C14;2C20</text>
            <text x="1115" y="419">N4C12</text>
            <text x="1051" y="436">3C14</text>
            <text x="1209" y="436">3C14</text>
          </g>
          <g class="ann">
            <text x="1014" y="282">0;6</text><text x="855" y="618">0;6</text><text x="1457" y="618">0;6</text>
            <text x="0" y="0" transform="translate(1228,252) rotate(-90)">0;6</text>
            <text x="0" y="0" transform="translate(757,731) rotate(-90)">6</text>
            <text x="0" y="0" transform="translate(1498,731) rotate(-90)">6</text>
          </g>
          <g class="octs">
            <use href="#oct" x="768" y="222"/><use href="#oct" x="921" y="222"/><use href="#oct" x="1079" y="222"/><use href="#oct" x="1221" y="222"/><use href="#oct" x="1380" y="222"/>
            <use href="#oct" x="614" y="357"/><use href="#oct" x="614" y="473"/><use href="#oct" x="614" y="527"/><use href="#oct" x="614" y="633"/><use href="#oct" x="1531" y="527"/><use href="#oct" x="1532" y="633"/>
            <use href="#oct" x="703" y="721"/><use href="#oct" x="774" y="721"/><use href="#oct" x="921" y="721"/><use href="#oct" x="939" y="721"/><use href="#oct" x="1045" y="721"/><use href="#oct" x="1144" y="721"/><use href="#oct" x="1244" y="721"/><use href="#oct" x="1350" y="721"/><use href="#oct" x="1368" y="721"/><use href="#oct" x="1514" y="721"/>
          </g>
          <g class="ax">
            <text x="768" y="230">6</text><text x="921" y="230">8</text><text x="1079" y="230">11</text><text x="1221" y="230">13</text><text x="1380" y="230">17</text>
            <text x="614" y="365">F</text><text x="614" y="481">E</text><text x="614" y="535">D</text><text x="614" y="641">C</text><text x="1531" y="535">D</text><text x="1532" y="641">C</text>
            <text x="703" y="729">5</text><text x="774" y="729">7</text><text x="921" y="729">8</text><text x="939" y="729">9</text><text x="1045" y="729">10</text><text x="1144" y="729">12</text><text x="1244" y="729">14</text><text x="1350" y="729">15</text><text x="1368" y="729">16</text><text x="1514" y="729">18</text>
          </g>
          <g class="ucs">
            <path class="ug" d="M662 680V650h-5l6-13 6 13h-5v30z"/>
            <path class="ur" d="M667 680h15v-6l14 8-14 8v-6h-15z"/>
            <circle cx="662" cy="673" r="7" fill="#00129a"/>
            <text class="ut g2t" x="662" y="634">Y</text>
            <text class="ut r2t" x="707" y="681">X</text>
          </g>
        </svg>
        <div class="viewtools">
          <svg class="vt"><use href="#f1"/></svg>
          <svg class="vt"><use href="#f2"/></svg>
          <svg class="vt"><use href="#f3"/></svg>
          <i class="caret dark"></i>
          <svg class="vt"><use href="#f4"/></svg>
          <i class="caret dark"></i>
          <svg class="vt"><use href="#f5"/></svg>
          <svg class="vt"><use href="#f6"/></svg>
          <hr class="vline">
          <svg class="vt"><use href="#f7"/></svg>
        </div>
      </div>
      <section class="panel beam">
        <div class="phead"><span class="x">×</span></div>
        <div class="btitle">梁平法表格</div>
        <div class="btools"><span>复制跨数据</span><span class="dis">粘贴跨数据</span><span>输入当前列数据</span><span>删除当前列数据</span><span>页面设置</span><span>调换起始跨</span><span>悬臂钢筋代号</span></div>
        <div class="bgrid">
          <div class="bh bfirst"></div><div class="bh">位置</div><div class="bh">名称</div><div class="bh">跨号</div><div class="bh">箍筋</div><div class="bh">肢数</div><div class="bh">次梁宽度</div><div class="bh">次梁加筋</div><div class="bh">吊筋</div><div class="bh">吊筋锚固</div><div class="bh">箍筋加密长度</div>
          <div class="bd bfirst">1</div><div class="bd">&lt;10,D...</div><div class="bd">KL28(1)</div><div class="bd">1</div><div class="bd"><sup>虫</sup>8@100/</div><div class="bd">2</div><div class="bd"></div><div class="bd"></div><div class="bd"></div><div class="bd"></div><div class="bd">max(1.5*h,500)</div>
        </div>
        <div class="bscroll"><i class="tl"></i><i class="bthumb"></i><i class="tr"></i></div>
      </section>
    </div>

    <aside class="panel disp">
      <div class="phead"></div>
      <div class="ptitle">显示设置</div>
      <div class="dtabs"><span class="dtab on">图元显示</span><span class="dtab">楼层显示</span></div>
      <div class="dtable">
        <div class="dr dh"><span class="dn">图层构件</span><span class="dc hc">显示</span></div>
        <div class="dr"><span class="dn ch last">辅助轴线</span><span class="dc"><i class="cb on"></i></span></div>
        <div class="dr"><span class="dn gp"><i class="minus"></i>柱</span><span class="dc"><i class="cb"></i></span></div>
        <div class="dr"><span class="dn ch">柱</span><span class="dc"><i class="cb on"></i></span></div>
        <div class="dr"><span class="dn ch">构造柱</span><span class="dc"><i class="cb on"></i></span></div>
        <div class="dr"><span class="dn ch">砌体柱</span><span class="dc"><i class="cb"></i></span></div>
        <div class="dr"><span class="dn ch last">约束边缘非阴...</span><span class="dc"><i class="cb on"></i></span></div>
        <div class="dr"><span class="dn gp"><i class="minus"></i>墙</span><span class="dc"><i class="cb"></i></span></div>
        <div class="dr"><span class="dn ch">剪力墙</span><span class="dc cur"><i class="cb on"></i></span></div>
        <div class="dr"><span class="dn ch">人防门框墙</span><span class="dc"><i class="cb on"></i></span></div>
        <div class="dr"><span class="dn ch">砌体墙</span><span class="dc"><i class="cb on"></i></span></div>
        <div class="dr"><span class="dn ch">砌体加筋</span><span class="dc"><i class="cb"></i></span></div>
        <div class="dr"><span class="dn ch">保温墙</span><span class="dc"><i class="cb"></i></span></div>
        <div class="dr"><span class="dn ch">暗梁</span><span class="dc"><i class="cb"></i></span></div>
        <div class="dr"><span class="dn ch">墙垛</span><span class="dc"><i class="cb"></i></span></div>
        <div class="dr"><span class="dn ch last">幕墙</span><span class="dc"><i class="cb on"></i></span></div>
        <div class="dr"><span class="dn gp"><i class="minus"></i>门窗洞</span><span class="dc"><i class="cb"></i></span></div>
        <div class="dr"><span class="dn ch">门</span><span class="dc"><i class="cb"></i></span></div>
        <div class="dr"><span class="dn ch">窗</span><span class="dc"><i class="cb"></i></span></div>
        <div class="dr"><span class="dn ch">门联窗</span><span class="dc"><i class="cb"></i></span></div>
        <div class="dr"><span class="dn ch">墙洞</span><span class="dc"><i class="cb"></i></span></div>
        <div class="dr"><span class="dn ch">带形窗</span><span class="dc"><i class="cb"></i></span></div>
        <div class="dr"><span class="dn ch">带形洞</span><span class="dc"><i class="cb"></i></span></div>
        <div class="dr"><span class="dn ch">飘窗</span><span class="dc"><i class="cb"></i></span></div>
        <div class="dr"><span class="dn ch last">老虎窗</span><span class="dc"><i class="cb"></i></span></div>
      </div>
    </aside>
  </main>

  <footer class="status">
    <span class="st-a">= 11405 Y = 3551</span>
    <span class="st-b">层高：&nbsp; 2.9</span>
    <span class="st-c">标高：&nbsp; 63.55~66.45</span>
    <span class="st-d">1(1)</span>
    <span class="st-e">隐藏：&nbsp;0</span>
    <span class="sbtn b1"><svg class="ic"><use href="#s1"/></svg></span>
    <span class="sbtn b2 on"><svg class="ic"><use href="#s2"/></svg><i class="caret dark"></i></span>
    <span class="sbtn b3"><svg class="ic"><use href="#s3"/></svg></span>
    <span class="sbtn b4"><svg class="ic"><use href="#s4"/></svg><i class="caret dark"></i></span>
    <span class="sbtn b5"><svg class="ic"><use href="#s5"/></svg><i class="caret dark"></i></span>
    <span class="sbtn b6"><svg class="ic"><use href="#s6"/></svg></span>
    <span class="sbtn b7"><svg class="ic"><use href="#s7"/></svg></span>
    <span class="st-f">按鼠标左键指定第一个角点，或拾取构件图元</span>
  </footer>
  <div class="strip"></div>

  <svg class="markup" viewBox="0 0 1753 1032" width="1753" height="1032">
    <polygon class="m-arrow" points="1119,473 1129,490 1125,490 1126,828 1125,828 1115.500,490 1110,490"/>
    <rect class="m-box" x="1111" y="860" width="128" height="39" rx="2"/>
  </svg>
</div>
</body>
</html>
```

FILE: styles.css
```css
* { box-sizing: border-box; }
html, body { margin: 0; padding: 0; background: #fff; }
body { font-family: "Noto Sans CJK SC", "Liberation Sans", sans-serif; font-size: 15px; line-height: 20px; color: #3b3b3b; }
.defs { position: absolute; }
.app { position: relative; width: 1753px; height: 1032px; overflow: hidden; display: flex; flex-direction: column; }

.ic { width: 20px; height: 20px; flex: none; fill: none; stroke: #5c6670; stroke-width: 1.300; }
.b { stroke: #2b8cf0; fill: none; }
.bf { fill: #2b8cf0; stroke: none; }
.red { stroke: #e0302a; }
.fillk { fill: #4b4b4b; stroke: none; }
.caret { display: inline-block; width: 0; height: 0; border: 3.500px solid transparent; border-top: 4.500px solid #9a9a9a; border-bottom: 0; margin-left: 8px; vertical-align: middle; flex: none; }
.caret.dark { border-top-color: #555; }

/* top */
.top { position: relative; display: flex; height: 52px; border-bottom: 1px solid #eee; }
.logo { position: relative; width: 44px; flex: none; }
.logo-t { position: absolute; left: 0; top: 0; width: 34px; height: 44px; fill: #12a0f0; }
.logo-mark { position: absolute; left: 31px; top: 39px; border: 3px solid transparent; border-right-color: #555; border-bottom-color: #555; }
.top-right { flex: 1; min-width: 0; }
.qat { height: 27px; display: flex; align-items: center; padding-left: 6px; white-space: nowrap; }
.qa { margin-right: 13px; }
.qa.off { opacity: .35; }
.qa.tight { margin-right: 11px; }
.q-caret { margin: 0 17px 0 -10px; }
.q-caret.short { margin-right: 13px; }
.win-title { margin-left: -4px; font-size: 15px; color: #444; letter-spacing: .44px; }
.win-title small { font-size: 9px; margin-right: 1px; color: #666; }
.tabs { display: flex; height: 25px; align-items: center; position: relative; }
.tab { padding: 0 16px; height: 25px; line-height: 25px; white-space: nowrap; }
.tab.active { background: #1e8df5; color: #fff; border-radius: 13px; }
.search { position: absolute; left: 1256px; top: 1px; width: 432px; height: 20px; background: #f5f6f7; border-radius: 3px; padding-left: 30px; display: flex; align-items: center; justify-content: space-between; line-height: 20px; white-space: nowrap; }
.search-text { color: #333; }
.sm { width: 15px; height: 15px; margin-right: 6px; stroke: #aaa; }
.assist { position: absolute; left: 1695px; top: 3px; width: 14px; height: 18px; background: #c6e2fb; border-radius: 3px; }
.popup { position: absolute; left: 1076px; top: 17px; width: 243px; height: 41px; background: #1088f0; color: #fff; border-radius: 4px; display: flex; align-items: center; padding-left: 8px; z-index: 3; white-space: nowrap; }
.popup::after { content: ""; position: absolute; right: -7px; top: 14px; border: 7px solid transparent; border-right: 0; border-left-color: #1088f0; }
.popup-btn { margin-left: 23px; width: 74px; height: 26px; line-height: 26px; background: #fff; color: #1088f0; text-align: center; border-radius: 2px; font-weight: 400; }

/* ribbon */
.ribbon { display: flex; height: 121px; border-bottom: 2px solid #e2e2e2; white-space: nowrap; }
.group { position: relative; flex: none; padding-top: 2px; }
.group::after { content: ""; position: absolute; right: 0; top: 3px; bottom: 5px; width: 1px; background: #e4e4e4; }
.rows { display: grid; grid-auto-rows: 28.700px; height: 86px; }
.it { display: flex; align-items: center; gap: 4px; }
.it .caret { margin-left: 6px; }
.it.off { color: #bdbdbd; }
.it.off .ic { opacity: .4; }
.glabel { height: 24px; line-height: 24px; margin-top: 5px; text-align: center; color: #444; padding-right: 10px; }
.glabel .caret { margin-left: 8px; }
.g1 { width: 272px; }
.g1 .rows { grid-template-columns: 47px 123px 1fr; }
.bigsel { grid-row: 1 / span 3; width: 42px; height: 84px; margin-top: 2px; background: #c5dcf5; border-radius: 0 4px 4px 0; display: flex; flex-direction: column; align-items: center; padding-right: 5px; }
.bigarrow { width: 26px; height: 38px; margin: 4px 0 3px; fill: #a3c8f2; stroke: #2b8cf0; stroke-width: 2; }
.g2 { width: 243px; padding-left: 10px; }
.g2 .rows { grid-template-columns: 99px 1fr; }
.g3 { width: 345px; padding-left: 10px; }
.g3 .rows { grid-template-columns: 83px 140px 1fr; }
.g4 { width: 296px; padding-left: 9px; }
.g4 .rows { grid-template-columns: 69px 68px 77px 1fr; }
.g5 { width: 84px; padding-left: 10px; }
.g5 .rows { grid-template-columns: 41px 1fr; }
.g6 { width: 126px; padding-left: 9px; }
.g6 .rows { grid-template-columns: 84px 1fr; }
.g7 { width: 98px; }
.g7 .glabel { padding-right: 0; padding-left: 3px; }
.smart { height: 86px; display: flex; flex-direction: column; align-items: center; padding-top: 2px; }
.ic-big { width: 42px; height: 42px; fill: none; stroke: #4c5660; stroke-width: 2; flex: none; }
.smart span { margin-top: 4px; }
.smart .caret { margin: 8px 0 0; }
.g8 { width: 289px; padding-left: 10px; }
.g8::after { display: none; }
.g8 .rows { grid-template-columns: 40px 28px 41px 123px 1fr; }
.g8 .glabel { padding: 0 0 0 82px; }
.chk-it { margin-left: -1px; }
.chk { width: 17px; height: 17px; background: #2b82e8; border-radius: 3px; position: relative; flex: none; }
.chk::after { content: ""; position: absolute; left: 5.500px; top: 2.500px; width: 5px; height: 9px; border: solid #fff; border-width: 0 2px 2px 0; transform: rotate(42deg); }

/* combos */
.combos { display: flex; height: 33px; gap: 4px; padding: 3px 0 0 0; background: #f1f1f1; overflow: hidden; flex: none; }
.combo { width: 123px; height: 27px; background: #fff; border-radius: 3px; display: flex; align-items: center; justify-content: space-between; padding: 0 7px 0 4px; }
.combo.first { width: 109px; margin-right: 0; border: 1px solid #6da9ec; padding-left: 0; }
.clipl { margin-left: -6px; }

/* main */
.main { display: flex; height: 784px; padding-top: 2px; background: #f1f1f1; flex: none; }
.panel { background: #fff; position: relative; overflow: hidden; }
.phead { height: 14px; background: #e6e6e6; position: relative; }
.x { position: absolute; right: 4px; top: -3px; font-size: 18px; color: #aaa; line-height: 18px; }
.ptitle { height: 28px; line-height: 26px; background: #f0f0f0; color: #777; padding-left: 0; border-top: 1px solid #f8f8f8; }
.nav { width: 244px; border-right: 1px solid #ddd; border-bottom: 1px solid #ddd; flex: none; }
.navtools { height: 33px; display: flex; align-items: center; justify-content: flex-end; gap: 4px; padding-right: 2px; position: relative; border-bottom: 2px solid #e6e6e6; }
.plus { position: absolute; left: -3px; top: 5px; color: #2b8cf0; }
.navbtn { width: 30px; height: 27px; background: #c5dcf5; border-radius: 3px; display: flex; align-items: center; justify-content: center; }
.navtree { position: relative; padding-top: 5px; }
.sb { position: absolute; background: #ccc; border-radius: 5px; }
.nav-sb { left: 230px; top: 22px; width: 10px; height: 568px; }
.n0, .n1 { height: 30px; display: flex; align-items: center; position: relative; white-space: nowrap; }
.n0 { padding-left: 12px; }
.n1 { padding-left: 37px; gap: 9px; width: 151px; margin-left: 0; }
.n1.sel { background: #c5dcf5; margin-left: 33px; width: 118px; padding-left: 4px; height: 26px; margin-top: 2px; margin-bottom: 2px; border-radius: 3px; }
.dot::before { content: ""; position: absolute; left: 52px; top: 1px; width: 7px; height: 7px; border-radius: 50%; background: #f00; }
.cr::before, .cd::before { content: ""; position: absolute; left: 0; border: 3px solid transparent; }
.cr::before { border-left-color: #888; }
.cd::before { border-top-color: #888; top: 14px; }
.lk { width: 15px; height: 15px; margin-left: 3px; }
.midcol { width: 344px; margin-left: 6px; display: flex; flex-direction: column; gap: 7px; flex: none; }
.comp { height: 252px; flex: none; }
.props { flex: 1; min-height: 0; }
.ptabs { display: flex; height: 28px; background: #f0f0f0; }
.ptab { width: 81px; line-height: 28px; text-align: center; background: #dedede; color: #999; }
.ptab.on { background: #f0f0f0; color: #333; font-weight: 700; }
.comp-tools { height: 36px; display: flex; align-items: center; padding-left: 6px; gap: 15px; position: relative; border-bottom: 1px solid #e6e6e6; white-space: nowrap; }
.ct { display: flex; align-items: center; gap: 5px; }
.ct .caret { margin-left: 4px; }
.more { position: absolute; right: 0; top: 5px; width: 13px; height: 24px; font-size: 8px; line-height: 24px; text-align: center; letter-spacing: -1px; color: #444; background: #fff; }
.comp-search { height: 24px; display: flex; align-items: center; justify-content: space-between; padding-left: 3px; color: #aaa; border-bottom: 2px solid #e6e6e6; }
.comp-tree { position: relative; height: 150px; overflow: hidden; padding-top: 3px; }
.comp-sb { left: 330px; top: 19px; width: 9px; height: 19px; }
.c0, .c1, .c2 { height: 30px; display: flex; align-items: center; white-space: nowrap; }
.c0 { padding-left: 17px; }
.c1 { padding-left: 42px; }
.c2 { padding-left: 76px; }
.c2 span { padding: 0 4px; height: 26px; line-height: 26px; width: 72px; border-radius: 3px; }
.c2sel { background: #c5dcf5; }
.tri { border: 3.500px solid transparent; border-top: 5px solid #888; border-bottom: 0; margin-right: 5px; }
.prop-wrap { position: relative; height: 480px; overflow: hidden; }
.prop-sb { left: 330px; top: 19px; width: 9px; height: 280px; }
.ptable { border-collapse: collapse; table-layout: fixed; width: 322px; }
.ptable th, .ptable td { height: 26.280px; padding: 0 4px; font-weight: 400; border: 1px solid #e4e4e4; white-space: nowrap; overflow: hidden; line-height: 20px; }
.ptable th { text-align: center; border-top: 0; height: 27px; }
.pn { width: 27px; }
.ptable td.pn { background: #f1f1f1; text-align: center; padding: 0; }
.pk { width: 126px; }
.pv { width: 169px; }
.ptable td.l { color: #2f6fe6; }
sup { font-size: 12px; line-height: 0; vertical-align: 4px; }
.centercol { width: 948px; margin-left: 5px; display: flex; flex-direction: column; gap: 6px; flex: none; position: relative; }
.canvas { position: relative; height: 528px; flex: none; overflow: hidden; }
.cad { display: block; }
.o { fill: #ff8c00; } .p { fill: #832bd6; } .k { fill: #666; }
.g { fill: #2bdb2b; } .v { fill: #8000ff; } .a { fill: #888; } .d { fill: #074d07; } .r { fill: #e02000; }
.c { fill: #00b4ff; } .y { fill: #ffe600; } .n { fill: #00ff00; }
.cad rect.b { fill: #3333ff; stroke: none; }
.rl { stroke: #ee1530; stroke-width: 1.300; fill: none; }
.wl { stroke: #fff; stroke-width: 1.500; fill: none; }
.note { fill: #2a7adf; font-family: "Liberation Sans", sans-serif; font-size: 12px; }
.ann { fill: #eee; font-family: "Liberation Sans", sans-serif; font-size: 18px; text-anchor: middle; }
.octs { fill: none; stroke: #0b6b0b; stroke-width: 1.200; }
.ax { fill: #eee; font-family: "Liberation Sans", sans-serif; font-size: 21px; text-anchor: middle; }
.ug { fill: #00f000; } .ur { fill: #f00000; }
.ut { font-family: "Liberation Sans", sans-serif; font-size: 17px; text-anchor: middle; }
.g2t { fill: #00d000; } .r2t { fill: #f00000; }
.viewtools { position: absolute; right: 0; top: 0; width: 41px; height: 307px; background: #fff; border-radius: 2px 2px 0 0; display: flex; flex-direction: column; align-items: center; padding-top: 15px; }
.vt { width: 28px; height: 28px; flex: none; margin-bottom: 8px; fill: none; stroke: #667079; stroke-width: 1.500; }
.viewtools .caret { margin: -2px 0 10px; }
.f3d { fill: #2b8cf0; stroke: none; font: 700 9px "Liberation Sans", sans-serif; }
.lf { fill: #c5dcf5; stroke: #2b8cf0; }
.lf2 { fill: #dceaf9; stroke: #2b8cf0; }
.vline { width: 29px; height: 1px; border: 0; background: #999; margin: 0 0 8px; flex: none; }
.sash { position: absolute; top: 202px; width: 5px; height: 125px; background: #6f7880; z-index: 2; }
.sash-l { left: -4px; width: 4px; }
.sash-r { right: -5px; }
.sash-b { position: absolute; left: 413px; top: 528px; width: 124px; height: 5px; background: #6f7880; z-index: 2; }
.sash-b::after { content: ""; position: absolute; left: 56px; top: 0; border: 4px solid transparent; border-top: 4px solid #ddd; border-bottom: 0; }
.beam { flex: 1; min-height: 0; margin-left: 2px; border-right: 1px solid #ddd; border-bottom: 1px solid #ddd; }
.btitle { height: 27px; line-height: 25px; background: #f0f0f0; color: #777; padding-left: 9px; }
.btools { height: 38px; display: flex; align-items: center; gap: 15px; padding-left: 6px; border-bottom: 2px solid #e6e6e6; white-space: nowrap; }
.dis { color: #bbb; }
.bgrid { display: grid; grid-template-columns: 7px 77px 76px 76px 76px 102px 101px 102px 100px 101px 127px; grid-template-rows: 42px 27px; }
.bh, .bd { border-right: 1px solid #e6e6e6; border-bottom: 2px solid #e6e6e6; white-space: nowrap; overflow: hidden; }
.bh { text-align: center; line-height: 40px; }
.bd { line-height: 25px; padding-left: 6px; }
.bfirst { background: #f1f1f1; padding: 0; text-align: center; }
.bscroll { position: absolute; left: 0; right: 0; bottom: 2px; height: 14px; }
.bthumb { position: absolute; left: 582px; top: 1px; width: 187px; height: 10px; border-radius: 5px; background: #ccc; }
.tl, .tr { position: absolute; top: 2px; border: 4px solid transparent; }
.tl { left: 5px; border-right-color: #555; border-left: 0; }
.tr { right: 8px; border-left-color: #555; border-right: 0; }
.disp { margin-left: 5px; flex: 1; border-left: 1px solid #ddd; background: #fff; }
.disp .ptitle { padding-left: 9px; }
.dtabs { height: 37px; display: flex; padding: 4px 0 0 4px; gap: 4px; background: #fff; }
.dtab { width: 77px; height: 29px; line-height: 29px; text-align: center; background: #eee; color: #777; border-radius: 3px 3px 0 0; }
.dtab.on { background: #fff; color: #2b8cf0; border: 1px solid #e0e0e0; border-bottom: 0; line-height: 27px; }
.dtable { margin-left: 5px; border-left: 1px solid #ddd; }
.dr { display: flex; height: 26.260px; border-bottom: 1px solid #e6e6e6; }
.dn { width: 164px; flex: none; line-height: 25px; white-space: nowrap; position: relative; border-right: 1px solid #e6e6e6; }
.dh .dn { text-align: center; padding-left: 0; }
.gp { padding-left: 38px; }
.ch { padding-left: 50px; }
.ch::before { content: ""; position: absolute; left: 23px; top: 0; bottom: 0; width: 1px; background: #ddd; }
.ch::after { content: ""; position: absolute; left: 23px; top: 12px; width: 19px; height: 1px; background: #ddd; }
.ch.last::before { bottom: 13px; }
.minus { position: absolute; left: 14px; top: 5px; width: 16px; height: 15px; border: 1px solid #888; border-radius: 2px; background: #fff; }
.minus::after { content: ""; position: absolute; left: 4px; top: 6px; width: 6px; height: 1px; background: #444; }
.dc { flex: 1; position: relative; overflow: hidden; }
.hc { background: #7ab9f4; color: #fff; padding-left: 8px; line-height: 25px; white-space: nowrap; }
.cur { box-shadow: inset 0 0 0 2px #888; }
.cb { position: absolute; left: 30px; top: 5px; width: 14px; height: 14px; border: 1px solid #999; background: #fff; }
.cb.on { background: #2b82e8; border-color: #2b82e8; }

/* status */
.status { height: 40px; background: #fbfbfb; border-top: 1px solid #dcdcdc; display: flex; align-items: center; white-space: nowrap; flex: none; }
.st-a { width: 313px; letter-spacing: .6px; word-spacing: 2.500px; }
.st-b { width: 104px; }
.st-c { width: 166px; }
.st-d { width: 129px; }
.st-e { width: 129px; }
.sbtn { height: 31px; border: 1px solid #999; border-radius: 3px; background: #fff; display: flex; align-items: center; justify-content: center; flex: none; }
.sbtn .caret { margin-left: 4px; }
.sbtn.on { background: #c5dcf5; border-color: #2b8cf0; }
.b1 { width: 29px; }
.b2 { width: 43px; margin-left: 6px; }
.b3 { width: 31px; margin-left: 9px; }
.b4 { width: 44px; margin-left: 8px; }
.b5 { width: 44px; margin-left: 5px; }
.b6 { width: 31px; margin-left: 5px; }
.b7 { width: 30px; margin-left: 4px; }
.st-f { margin-left: 8px; }
.strip { height: 2px; background: #cfdcef; flex: none; }
.markup { position: absolute; left: 0; top: 0; pointer-events: none; z-index: 5; }
.m-arrow { fill: #ff1a00; }
.m-box { fill: none; stroke: #f01010; stroke-width: 3px; }
```
